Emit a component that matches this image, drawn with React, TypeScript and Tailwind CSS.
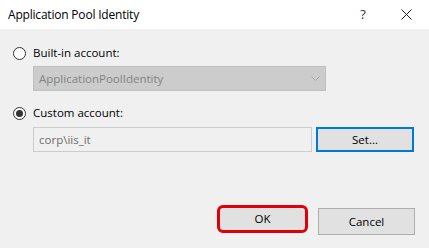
import React from 'react';

function Radio({ checked }: { checked?: boolean }) {
  return (
    <span className="flex h-[13px] w-[13px] items-center justify-center rounded-full border border-[#333333] bg-white">
      {checked && <span className="h-[7px] w-[7px] rounded-full bg-[#333333]" />}
    </span>
  );
}

export default function App() {
  return (
    <div
      className="flex h-[248px] w-[429px] flex-col bg-[#f0f0f0] text-[11.5px] text-black"
      style={{ fontFamily: '"Segoe UI", "Open Sans", "Noto Sans", sans-serif' }}
    >
      {/* title bar */}
      <div className="flex h-[29px] items-center bg-white pl-2 text-[12px]">
        <span className="flex-1 tracking-[-0.2px]">Application Pool Identity</span>
        <span className="w-[14px] text-center text-[13px] text-[#333]">?</span>
        <span className="ml-[30px] mr-[17px] flex h-[12px] w-[12px] items-center justify-center">
          <svg width="11" height="11" viewBox="0 0 11 11">
            <path d="M0.5 0.5L10.5 10.5M10.5 0.5L0.5 10.5" stroke="#222" strokeWidth="1" />
          </svg>
        </span>
      </div>

      {/* body */}
      <div className="flex flex-1 flex-col pl-[13px] pt-[17px]">
        <label className="flex h-[14px] items-center gap-[7px]">
          <Radio />
          <span>Built-in account:</span>
        </label>
        <div className="ml-[20px] mt-[6px] flex h-[25px] w-[293px] items-center border border-[#bfbfbf] bg-[#cccccc] pl-[5px] text-[#838383]">
          <span className="flex-1">ApplicationPoolIdentity</span>
          <svg width="9" height="6" viewBox="0 0 9 6" className="mr-[5px]">
            <path d="M0.5 0.5L4.5 4.5L8.5 0.5" stroke="#a8a8a8" fill="none" strokeWidth="1" />
          </svg>
        </div>

        <label className="mt-[15px] flex h-[14px] items-center gap-[7px]">
          <Radio checked />
          <span>Custom account:</span>
        </label>
        <div className="ml-[20px] mt-[7px] flex h-[25px] items-center">
          <div className="flex h-full w-[279px] items-center border border-[#cccccc] bg-[#f0f0f0] pl-[5px] text-[#6d6d6d]">
            corp\iis_it
          </div>
          <button className="ml-[4px] h-full w-[98px] border-2 border-[#0078d7] bg-[#e1e1e1]">Set...</button>
        </div>

        <div className="mt-auto flex items-end justify-end gap-[10px] pb-[13px] pr-[14px]">
          <button className="mb-[2px] h-[28px] w-[91px] rounded-[6px] border-[3px] border-[#e0000b] bg-[#e1e1e1]">
            OK
          </button>
          <button className="h-[27px] w-[97px] border border-[#adadad] bg-[#e1e1e1]">Cancel</button>
        </div>
      </div>
    </div>
  );
}
